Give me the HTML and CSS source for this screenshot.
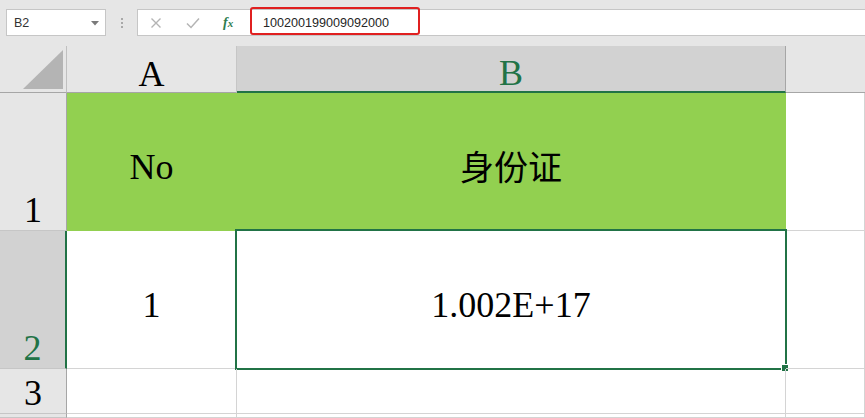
FILE: index.html
```html
<!DOCTYPE html>
<html lang="zh-CN">
<head>
<meta charset="utf-8">
<title>Sheet</title>
<link rel="stylesheet" href="styles.css">
</head>
<body>
<div class="app">
  <div class="toolbar">
    <div class="namebox">
      <span class="name">B2</span>
      <svg class="caret" width="8" height="5" viewBox="0 0 8 5"><path d="M0 0 L8 0 L4 4.5 Z" fill="#7a7a7a"/></svg>
    </div>
    <div class="grip"><i></i><i></i><i></i></div>
    <div class="fbuttons">
      <svg class="btn" width="12" height="12" viewBox="0 0 12 12"><path d="M1.5 1.5 L10.5 10.5 M10.5 1.5 L1.5 10.5" stroke="#b4b4b4" stroke-width="1.4" fill="none"/></svg>
      <svg class="btn" width="14" height="12" viewBox="0 0 14 12"><path d="M1 6.5 L5 10.5 L13 1.5" stroke="#b4b4b4" stroke-width="1.5" fill="none"/></svg>
      <span class="fx">f<small>x</small></span>
    </div>
    <div class="formula">
      <span class="ftext">100200199009092000</span>
      <div class="highlight"></div>
    </div>
  </div>
  <div class="sheet">
    <div class="corner"><svg width="40" height="39" viewBox="0 0 40 39"><path d="M40 0 L40 39 L0 39 Z" fill="#b4b4b4"/></svg></div>
    <div class="colhead">A</div>
    <div class="colhead sel">B</div>
    <div class="colhead rest"></div>

    <div class="rowhead">1</div>
    <div class="cell green">No</div>
    <div class="cell green cjk">身份证</div>
    <div class="cell"></div>

    <div class="rowhead sel">2</div>
    <div class="cell">1</div>
    <div class="cell active">1.002E+17<div class="selbox"><span class="handle"></span></div></div>
    <div class="cell"></div>

    <div class="rowhead">3</div>
    <div class="cell"></div>
    <div class="cell"></div>
    <div class="cell"></div>

    <div class="rowhead last"></div>
    <div class="cell last"></div>
    <div class="cell last"></div>
    <div class="cell last"></div>
  </div>
</div>
</body>
</html>
```

FILE: styles.css
```css
* { box-sizing: border-box; }
html, body { margin: 0; padding: 0; }
body { width: 865px; height: 418px; overflow: hidden; background: #ffffff; }
.app { display: flex; flex-direction: column; height: 418px; overflow: hidden; }

.toolbar {
  flex: 0 0 46px;
  height: 46px;
  background: #e6e6e6;
  display: flex;
  align-items: flex-start;
  padding-top: 9px;
  padding-left: 6px;
  font-family: "Liberation Sans", Arial, sans-serif;
}
.namebox {
  width: 100px;
  height: 27px;
  background: #fff;
  border: 1px solid #c6c6c6;
  display: flex;
  align-items: center;
  justify-content: space-between;
  padding: 0 6px 0 7px;
}
.name { font-size: 12.5px; color: #333; }
.caret { margin-top: 1px; }
.grip {
  width: 31px;
  height: 27px;
  display: flex;
  flex-direction: column;
  align-items: center;
  justify-content: center;
  gap: 2px;
}
.grip i { display: block; width: 2px; height: 2px; background: #a8a8a8; }
.fbuttons {
  width: 112px;
  height: 27px;
  background: #fff;
  border: 1px solid #c6c6c6;
  border-right: none;
  display: flex;
  align-items: center;
  padding-left: 12px;
  gap: 24px;
}
.fx {
  font-family: "Liberation Serif", serif;
  font-style: italic;
  font-weight: bold;
  font-size: 14px;
  color: #2e7d4f;
  margin-left: -1px;
}
.fx small { font-size: 11px; }
.formula {
  flex: 1;
  height: 27px;
  background: #fff;
  border-top: 1px solid #c6c6c6;
  border-bottom: 1px solid #c6c6c6;
  position: relative;
  display: flex;
  align-items: center;
  padding-left: 14px;
}
.ftext { font-size: 12.6px; color: #262626; }
.highlight {
  position: absolute;
  left: 1px;
  top: -3px;
  width: 170px;
  height: 28px;
  border: 2px solid #e02020;
  border-radius: 3px;
}

.sheet {
  flex: 1 1 auto;
  min-height: 0;
  overflow: hidden;
  display: grid;
  grid-template-columns: 67px 170px 549px 1fr;
  grid-template-rows: 47px 138px 138px 45px minmax(0, 1fr);
  font-family: "Liberation Serif", "Noto Sans CJK SC", serif;
  font-size: 36px;
  line-height: 36px;
  color: #000;
}
.corner {
  background: #e6e6e6;
  border-bottom: 1px solid #a6a6a6;
  border-right: 1px solid #c0c0c0;
  display: flex;
  align-items: flex-end;
  justify-content: flex-end;
  padding: 0 3px 3px 0;
}
.colhead {
  background: #e6e6e6;
  border-bottom: 1px solid #a6a6a6;
  border-right: 1px solid #c6c6c6;
  display: flex;
  justify-content: center;
  align-items: center;
  padding-top: 9px;
}
.colhead.sel {
  background: #d2d2d2;
  color: #217346;
  border-bottom: 2px solid #217346;
  border-right: 1px solid #a6a6a6;
}
.colhead.rest { border-right: none; }
.rowhead {
  background: #e6e6e6;
  border-right: 1px solid #a6a6a6;
  border-bottom: 1px solid #c6c6c6;
  display: flex;
  justify-content: center;
  align-items: flex-end;
  padding-bottom: 2px;
}
.rowhead.sel {
  background: #d2d2d2;
  color: #217346;
  border-right: 2px solid #217346;
}
.cell {
  border-right: 1px solid #d4d4d4;
  border-bottom: 1px solid #d4d4d4;
  display: flex;
  align-items: center;
  justify-content: center;
  padding-top: 10px;
  position: relative;
}
.last { padding: 0; min-height: 0; }
.cell.green { background: #92d050; border-color: #92d050; }
.cjk { font-family: "Noto Sans CJK SC", sans-serif; font-size: 34px; padding-top: 8px; }
.selbox {
  position: absolute;
  left: -2px;
  top: -2px;
  right: -2px;
  bottom: -2px;
  border: 2px solid #217346;
}
.handle {
  position: absolute;
  right: -4px;
  bottom: -4px;
  width: 6px;
  height: 6px;
  background: #217346;
  border: 1px solid #fff;
  box-sizing: content-box;
}
```
